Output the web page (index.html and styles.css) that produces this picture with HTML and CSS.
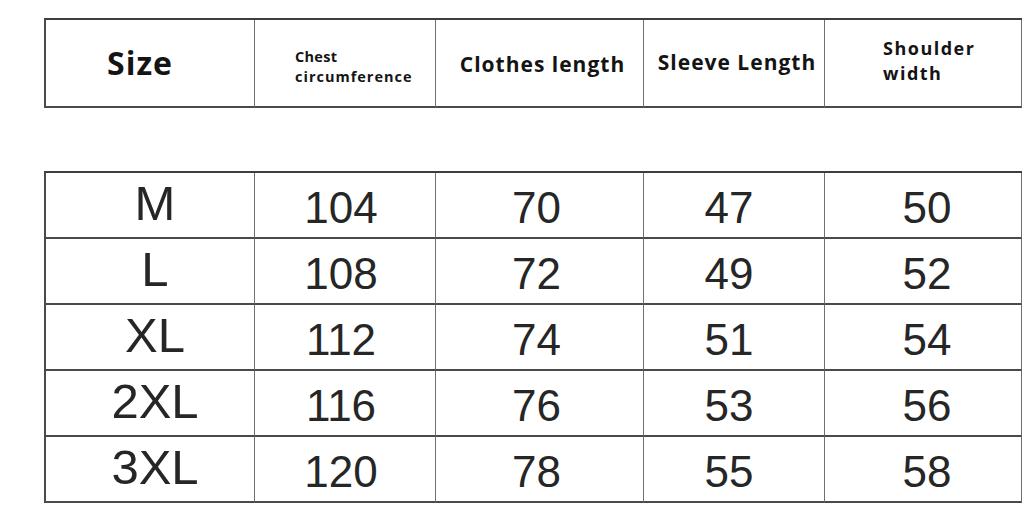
FILE: index.html
```html
<!DOCTYPE html>
<html lang="en">
<head>
<meta charset="utf-8">
<title>Size chart</title>
<link rel="stylesheet" href="styles.css">
</head>
<body>
<main class="page">
  <div class="grid head">
    <div class="cell h-size">Size</div>
    <div class="cell h-chest"><span>Chest</span><span class="wide">circumference</span></div>
    <div class="cell h-clothes">Clothes length</div>
    <div class="cell h-sleeve">Sleeve Length</div>
    <div class="cell h-shoulder"><span>Shoulder</span><span>width</span></div>
  </div>
  <div class="grid data">
    <div class="cell size">M</div><div class="cell num c2">104</div><div class="cell num c3">70</div><div class="cell num c4">47</div><div class="cell num c5">50</div>
    <div class="cell size">L</div><div class="cell num c2">108</div><div class="cell num c3">72</div><div class="cell num c4">49</div><div class="cell num c5">52</div>
    <div class="cell size">XL</div><div class="cell num c2">112</div><div class="cell num c3">74</div><div class="cell num c4">51</div><div class="cell num c5">54</div>
    <div class="cell size">2XL</div><div class="cell num c2">116</div><div class="cell num c3">76</div><div class="cell num c4">53</div><div class="cell num c5">56</div>
    <div class="cell size">3XL</div><div class="cell num c2">120</div><div class="cell num c3">78</div><div class="cell num c4">55</div><div class="cell num c5">58</div>
  </div>
</main>
</body>
</html>
```
FILE: styles.css
```css
* { box-sizing: border-box; }
html, body { margin: 0; padding: 0; background: #fff; }
body { width: 1024px; height: 510px; overflow: hidden; }

.page {
  display: flex;
  flex-direction: column;
  padding: 18px 0 0 44px;
}

.grid {
  display: grid;
  grid-template-columns: 209px 181px 208px 181px 197px;
  border-top: 2px solid #3e3e3e;
  border-left: 2px solid #4a4a4a;
  width: 978px;
}

.cell {
  display: flex;
  align-items: center;
  justify-content: center;
  border-right: 1px solid #707070;
  border-bottom: 2px solid #4a4a4a;
  color: #141414;
}

.head .cell {
  height: 88px;
  font-family: "Open Sans", "Noto Sans", sans-serif;
  font-weight: 700;
}

.h-size {
  font-size: 32px;
  letter-spacing: 1px;
  padding-right: 20px;
  padding-bottom: 2px;
}

.h-chest {
  flex-direction: column;
  align-items: flex-start;
  justify-content: center;
  padding-left: 40px;
  padding-top: 8px;
  font-size: 14.5px;
  line-height: 20px;
  letter-spacing: 0.3px;
}
.h-chest .wide { letter-spacing: 1px; }

.h-clothes {
  font-size: 21px;
  letter-spacing: 1px;
  padding-left: 6px;
  padding-top: 2px;
}

.h-sleeve {
  font-size: 21px;
  letter-spacing: 1px;
  padding-left: 6px;
  padding-bottom: 2px;
}

.h-shoulder {
  flex-direction: column;
  align-items: flex-start;
  padding-left: 58px;
  padding-bottom: 4px;
  font-size: 18px;
  line-height: 25px;
  letter-spacing: 1.5px;
}

.data { margin-top: 63px; }

.data .cell {
  height: 66px;
  font-family: "Liberation Sans", Arial, sans-serif;
  font-weight: 400;
  color: #262626;
}

.size {
  font-size: 49px;
  padding-left: 10px;
  padding-bottom: 4px;
}

.num {
  font-size: 44px;
  padding-top: 5px;
}
.c2 { padding-right: 8px; }
.c3 { padding-right: 6px; }
.c4 { padding-right: 10px; }
.c5 { padding-left: 8px; }
```
